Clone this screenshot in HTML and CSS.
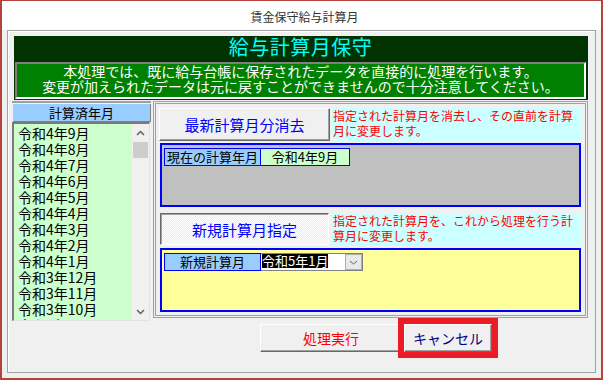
FILE: index.html
```html
<!DOCTYPE html>
<html lang="ja">
<head>
  <meta charset="UTF-8">
  <title>賃金保守給与計算月</title>
  <link rel="stylesheet" href="styles.css">
</head>
<body>
<div class="window">
  <div class="titlebar">賃金保守給与計算月</div>

  <div class="frame">
    <div class="banner">
      <div class="banner-title">給与計算月保守</div>
      <div class="notice">
        本処理では、既に給与台帳に保存されたデータを直接的に処理を行います。<br>
        変更が加えられたデータは元に戻すことができませんので十分注意してください。
      </div>
    </div>

    <div class="work">
      <!-- 計算済みの月一覧 -->
      <div class="history">
        <div class="history-head">計算済年月</div>
        <div class="history-list">
          <ul class="months">
            <li>令和4年9月</li>
            <li>令和4年8月</li>
            <li>令和4年7月</li>
            <li>令和4年6月</li>
            <li>令和4年5月</li>
            <li>令和4年4月</li>
            <li>令和4年3月</li>
            <li>令和4年2月</li>
            <li>令和4年1月</li>
            <li>令和3年12月</li>
            <li>令和3年11月</li>
            <li>令和3年10月</li>
            <li>令和3年9月</li>
          </ul>
          <div class="scrollbar">
            <div class="scroll-btn">
              <svg width="9" height="6" viewBox="0 0 9 6"><polyline points="1,5 4.5,1.5 8,5" fill="none" stroke="#606060" stroke-width="1.5"/></svg>
            </div>
            <div class="scroll-thumb"></div>
            <div class="scroll-track"></div>
            <div class="scroll-btn">
              <svg width="9" height="6" viewBox="0 0 9 6"><polyline points="1,1 4.5,4.5 8,1" fill="none" stroke="#606060" stroke-width="1.5"/></svg>
            </div>
          </div>
        </div>
      </div>

      <!-- 操作パネル -->
      <div class="actions">
        <div class="action-row">
          <button class="cmd">最新計算月分消去</button>
          <div class="hint">指定された計算月を消去し、その直前を計算<br>月に変更します。</div>
        </div>
        <div class="panel panel-gray">
          <div class="field">
            <span class="field-label">現在の計算年月</span>
            <span class="field-value">令和4年9月</span>
          </div>
        </div>

        <div class="action-row action-row-new">
          <button class="cmd cmd-pressed">新規計算月指定</button>
          <div class="hint">指定された計算月を、これから処理を行う計<br>算月に変更します。</div>
        </div>
        <div class="panel panel-yellow">
          <div class="field">
            <span class="field-label field-label-center">新規計算月</span>
            <div class="combo">
              <span class="combo-text">令和5年1月</span>
              <span class="combo-btn">
                <svg width="9" height="5" viewBox="0 0 9 5"><polyline points="1,1 4.5,4 8,1" fill="none" stroke="#606060" stroke-width="1"/></svg>
              </span>
            </div>
          </div>
        </div>
      </div>
    </div>

    <div class="footer">
      <button class="cmd cmd-run">処理実行</button>
      <button class="cmd cmd-cancel">キャンセル</button>
    </div>
  </div>
</div>
</body>
</html>
```

FILE: styles.css
```css
* {
  box-sizing: border-box;
}

body {
  margin: 0;
  font-family: "Noto Sans CJK JP", "Noto Sans", sans-serif;
  background: #f0f0f0;
}

.window {
  width: 603px;
  height: 380px;
  border: 2px solid #b5423d;
  border-top-width: 1px;
  background: #f0f0f0;
  overflow: hidden;
}

.titlebar {
  height: 29px;
  padding-left: 6px;
  background: #fff;
  color: #333;
  font-size: 12px;
  line-height: 32px;
  text-align: center;
}

.frame {
  width: 589px;
  height: 343px;
  margin-left: 5px;
  padding: 5px 7px 0 4px;
  border: 1px solid #a0a0a0;
  box-shadow: inset 1px 1px #fff;
}

/* 見出し */
.banner {
  height: 64px;
  margin-left: 2px;
  padding: 0 2px 0 1px;
  background: #003300;
}

.banner-title {
  height: 26px;
  color: #00ffff;
  font-size: 20px;
  line-height: 22px;
  letter-spacing: 0.5px;
  text-align: center;
}

.notice {
  height: 37px;
  border: 2px solid;
  border-color: #808080 #fff #fff #808080;
  background: #008000;
  color: #fff;
  font-size: 14px;
  line-height: 15px;
  text-align: center;
}

.work {
  display: grid;
  grid-template-columns: 139px 435px;
  column-gap: 2px;
  align-items: start;
}

/* 左の一覧 */
.history {
  margin-top: 1px;
  padding-top: 1px;
  border-top: 2px solid #a0a0a0;
}

.history-head {
  height: 18px;
  margin-left: 1px;
  border-right: 1px solid #808080;
  border-bottom: 1px solid #808080;
  background: #99ccff;
  font-size: 13px;
  line-height: 17px;
  text-align: center;
}

.history-list {
  display: flex;
  height: 199px;
  margin-right: 1px;
  border: 1px solid #e3e3e3;
  border-top: 2px solid #7a7a7a;
  border-left: 2px solid #7a7a7a;
}

.months {
  flex: 1;
  margin: 0;
  padding: 1px 0 0 4px;
  list-style: none;
  background: #ccffcc;
  overflow: hidden;
  font-size: 14px;
  line-height: 16px;
}

.scrollbar {
  width: 17px;
  display: flex;
  flex-direction: column;
  background: #f0f0f0;
}

.scroll-btn {
  height: 17px;
  display: flex;
  align-items: center;
  justify-content: center;
}

.scroll-btn svg {
  display: block;
}

.scroll-thumb {
  height: 16px;
  margin: 1px 1px 0;
  background: #cdcdcd;
}

.scroll-track {
  flex: 1;
}

/* 右の操作パネル */
.actions {
  height: 217px;
  margin-top: 1px;
  padding: 4px 3px 3px;
  border: 3px double #a0a0a0;
}

.action-row {
  display: grid;
  grid-template-columns: 171px 1fr;
  column-gap: 2px;
  height: 33px;
}

.action-row-new {
  height: 32px;
  margin-top: 6px;
}

.cmd {
  padding: 0;
  font-family: inherit;
  font-size: 15px;
  color: #0000ff;
  background: #f0f0f0;
  border: 1px solid;
  border-color: #fff #696969 #696969 #fff;
  box-shadow: inset -1px -1px #a0a0a0;
}

.cmd-pressed {
  margin: 0 1px;
  border-color: #696969 #fff #fff #696969;
  box-shadow: inset 1px 1px #a0a0a0;
  background: repeating-conic-gradient(#fff 0 25%, #ebebeb 0 50%) 0 0 / 2px 2px;
}

.hint {
  padding-left: 1px;
  background: #ccffff;
  color: #ff0000;
  font-size: 12px;
  line-height: 15px;
  white-space: nowrap;
}

.panel {
  height: 64px;
  margin: 2px 1px 0;
  padding: 3px 2px;
  border: 2px solid #0000ff;
}

.panel-gray {
  background: #c0c0c0;
}

.panel-yellow {
  margin-top: 3px;
  background: #ffff99;
}

.field {
  display: flex;
  height: 18px;
  font-size: 13px;
  line-height: 16px;
}

.field-label {
  width: 97px;
  padding-left: 2px;
  border: 1px solid #0000ff;
  background: #99ccff;
}

.field-label-center {
  padding-left: 0;
  text-align: center;
}

.field-value {
  width: 89px;
  border: 1px solid #0000ff;
  border-left: 0;
  background: #ccffcc;
  text-align: center;
}

.combo {
  display: flex;
  width: 102px;
  padding-left: 1px;
  border: 1px solid #828282;
  border-left: 0;
  background: #fff;
}

.combo-text {
  height: 14px;
  background: #000;
  color: #fff;
  line-height: 14px;
}

.combo-btn {
  width: 17px;
  height: 16px;
  margin-left: auto;
  display: flex;
  align-items: center;
  justify-content: center;
  border: 1px solid #adadad;
  background: #e9e9e9;
}

/* 下部ボタン */
.footer {
  display: flex;
  gap: 2px;
  margin-top: 3px;
  padding-left: 248px;
}

.footer .cmd {
  height: 28px;
  font-size: 14px;
}

.cmd-run {
  width: 142px;
  color: #ff0000;
}

.cmd-cancel {
  width: 88px;
  color: #000080;
  outline: 6px solid #ed1c24;
}
```
